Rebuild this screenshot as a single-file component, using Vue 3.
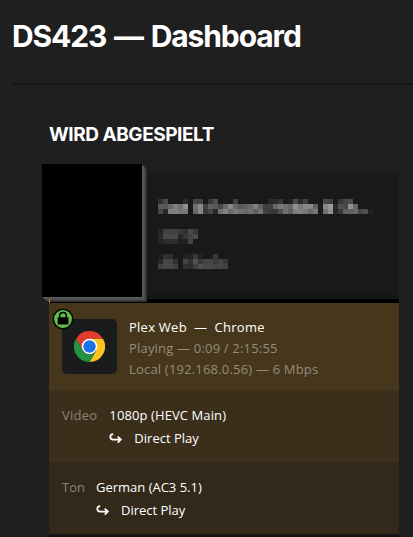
<script setup>
// gray level per 5px block, two hex digits each, '..' is an empty block
const bloques = [
    {
        clase: 'titulo',
        filas: [
            '304a......2a..4444..3850......40............282838..204a2a40......4840..38484c........',
            '585868807090..7088406058486888685860688060404068787068907888886' + '0..88982850489068......',
            '482880807878..688838482870806878706870607040383850706080807868' + '78..70902838606068485022'
        ]
    },
    {
        clase: 'anio',
        filas: ['2440404438304838', '284848482838444a', '242c2c2c202044..']
    },
    {
        clase: 'genero',
        filas: [
            '1e3030....22223822....38....',
            '28484430..443050384444384438',
            '40484840..302c40504848444840'
        ]
    }
]

const celdas = (fila) => fila.match(/../g).map(n => (n === '..' ? 'transparent' : `#${n}${n}${n}`))

const pistas = [
    { tipo: 'Video', texto: '1080p (HEVC Main)', clase: 'video' },
    { tipo: 'Ton', texto: 'German (AC3 5.1)', clase: 'ton' }
]
</script>

<template>
    <div class="pagina">
        <header>
            <h1>DS423 — Dashboard</h1>
        </header>
        <main>
            <h2>WIRD ABGESPIELT</h2>
            <div class="tarjeta">
                <div class="media">
                    <div class="poster"></div>
                    <div class="info">
                        <div v-for="b in bloques" :key="b.clase" class="mosaico" :class="b.clase">
                            <div v-for="(fila, i) in b.filas" :key="i" class="fila">
                                <span v-for="(color, j) in celdas(fila)" :key="j" :style="{ background: color }"></span>
                            </div>
                        </div>
                    </div>
                </div>
                <div class="progreso"><div class="avance"></div></div>
                <div class="reproductor">
                    <div class="icono">
                        <svg class="chrome" viewBox="0 0 48 48">
                            <path fill="#e33b2e" d="M3.2 12A24 24 0 0 1 44.8 12H24L13.6 30Z" />
                            <path fill="#fcc31e" d="M44.8 12A24 24 0 0 1 24 48L34.4 30L24 12Z" />
                            <path fill="#229342" d="M24 48A24 24 0 0 1 3.2 12L13.6 30A12 12 0 0 0 34.4 30Z" />
                            <circle cx="24" cy="24" r="12" fill="#fff" />
                            <circle cx="24" cy="24" r="9.6" fill="#1a73e8" />
                        </svg>
                        <svg class="candado" viewBox="0 0 22 22">
                            <circle cx="11" cy="11" r="9.7" fill="#62bd50" stroke="#080c04" stroke-width="1.5" />
                            <path d="M7.7 10V7.7a3.3 3.3 0 0 1 6.6 0V10" fill="none" stroke="#000" stroke-width="1.5" />
                            <rect x="5.7" y="9.2" width="10.8" height="7.2" rx="1" />
                        </svg>
                    </div>
                    <div class="detalles">
                        <div class="nombre">Plex Web&nbsp; — &nbsp;Chrome</div>
                        <div class="estado">Playing — 0:09 / 2:15:55</div>
                        <div class="red">Local (192.168.0.56) — 6 Mbps</div>
                    </div>
                </div>
                <div v-for="p in pistas" :key="p.tipo" class="pista" :class="p.clase">
                    <span class="tipo">{{ p.tipo }}</span>
                    <div class="valor">
                        <div class="codec">{{ p.texto }}</div>
                        <div class="directo">
                            <svg viewBox="0 0 14 12">
                                <path d="M4.2 1.2C.4 1.5.3 6.4 4.2 6.6H11.5M8.7 3.6L11.9 6.6L8.7 9.7" />
                            </svg>
                            <span>Direct Play</span>
                        </div>
                    </div>
                </div>
            </div>
        </main>
    </div>
</template>

<style>
body {
    margin: 0;
    background: #1f1f1f;
}
</style>

<style scoped>
.pagina {
    box-sizing: border-box;
    height: 537px;
    overflow: hidden;
    padding-left: 12px;
    background: #1f1f1f;
    color: #fff;
    font-family: "Open Sans", "Noto Sans", sans-serif;
}

header {
    box-sizing: border-box;
    height: 85px;
    padding-top: 16px;
    border-bottom: 2px solid #161616;
}

h1,
h2 {
    margin: 0;
    font-family: Inter, sans-serif;
    font-weight: 700;
    white-space: nowrap;
}

h1 {
    font-size: 30px;
    line-height: 40px;
    letter-spacing: -1.1px;
    word-spacing: 1.7px;
}

main {
    padding: 38px 14px 0 37px;
}

h2 {
    font-size: 19px;
    line-height: 24px;
    letter-spacing: -0.45px;
}

.tarjeta {
    width: 350px;
    margin-top: 23px;
    border-bottom: 3px solid #151515;
}

.media {
    box-sizing: border-box;
    display: flex;
    height: 129px;
    border-top: 4px solid #1d1d1d;
    border-bottom: 5px solid #161616;
    background: #191919;
}

.poster {
    position: relative;
    z-index: 1;
    flex: none;
    width: 100px;
    height: 133px;
    margin: -10px 0 0 -7px;
    background: #000;
    box-shadow: 1px 1px #5a5a5a, 2px 2px #535353, 3px 3px #4b4b4b, 4px 4px #404040, 5px 5px #2c2c2c;
}

.info {
    display: flex;
    flex-direction: column;
    padding: 25px 0 0 16px;
}

.titulo {
    margin-bottom: 15px;
}

.anio {
    margin-bottom: 10px;
}

.fila {
    display: flex;
}

.fila span {
    width: 5px;
    height: 5px;
}

.progreso {
    height: 4px;
    background: #000;
}

.avance {
    position: relative;
    z-index: 2;
    width: 1px;
    height: 4px;
    background: #cc8228;
}

.reproductor {
    box-sizing: border-box;
    display: flex;
    gap: 12px;
    height: 87px;
    padding: 14px 0 0 13px;
    background: #46371c;
}

.icono {
    position: relative;
    display: flex;
    align-items: center;
    justify-content: center;
    width: 55px;
    height: 55px;
    margin-top: 2px;
    border-radius: 5px;
    background: #191b1d;
}

.chrome {
    width: 31px;
    height: 31px;
}

.candado {
    position: absolute;
    left: -10.5px;
    top: -11.5px;
    width: 22px;
    height: 22px;
}

.detalles,
.pista {
    font-size: 13px;
    line-height: 21px;
    white-space: nowrap;
}

.detalles {
    letter-spacing: 0.19px;
}

.nombre {
    letter-spacing: 0.25px;
}

.estado,
.red {
    color: #958b7b;
}

.pista {
    box-sizing: border-box;
    display: flex;
    gap: 12px;
    height: 72px;
    padding: 14px 0 0 13px;
    line-height: 23px;
}

.video {
    background: #3b2f1c;
}

.video .tipo {
    letter-spacing: 0.25px;
}

.video .codec {
    letter-spacing: 0.1px;
}

.ton {
    gap: 11px;
    background: #32291b;
}

.tipo {
    color: #8a8275;
}

.directo {
    display: flex;
    align-items: center;
    gap: 11px;
}

.directo svg {
    width: 14px;
    height: 12px;
    fill: none;
    stroke: #fff;
    stroke-width: 1.7;
}
</style>
